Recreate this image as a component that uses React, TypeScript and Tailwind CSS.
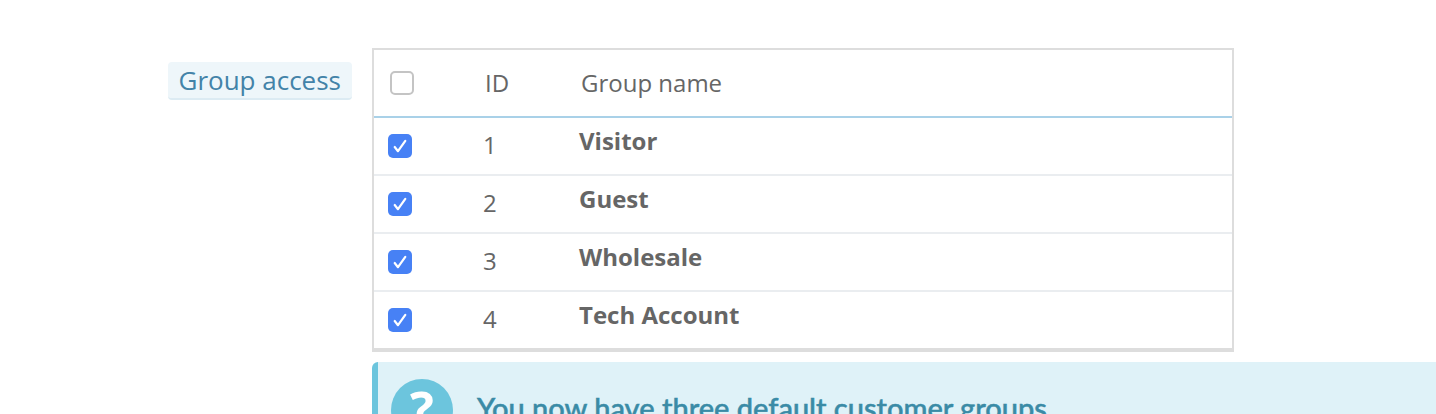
const groups = [
  { id: 1, name: 'Visitor' },
  { id: 2, name: 'Guest' },
  { id: 3, name: 'Wholesale' },
  { id: 4, name: 'Tech Account' },
];

const CheckedBox = () => (
  <span className="flex h-6 w-6 items-center justify-center rounded-[5px] bg-[#4781f5]">
    <svg width="14" height="14" viewBox="0 0 14 14" fill="none">
      <path d="M1.7 8L5 12.2L12.3 1.8" stroke="#ffffff" strokeWidth="2.2" strokeLinecap="round" strokeLinejoin="round" />
    </svg>
  </span>
);

const App: React.FC = () => {
  return (
    <div className="h-[414px] w-[1436px] overflow-hidden bg-white pt-12 font-['Open_Sans',sans-serif] text-[#666666]">
      <div className="flex">
        <div className="flex w-[352px] shrink-0 justify-end pt-[14px]">
          <span className="h-[38px] rounded-[4px] border-b-2 border-[#dcebf3] bg-[#eef6fa] pl-[10px] pr-[11px] text-[26px] leading-[36px] text-[#4383a8]">
            Group access
          </span>
        </div>

        {/* Groups table */}
        <div className="ml-5 h-[304px] w-[862px] border-2 border-b-4 border-[#dddddd]">
          <div className="flex h-[68px] items-center border-b-2 border-[#a9d1e8] text-[24px]">
            <div className="w-[110px] pl-4">
              <span className="block h-6 w-6 rounded-[5px] border-2 border-[#c4c4c4] bg-white" />
            </div>
            <div className="w-[97px] pl-px">ID</div>
            <div>Group name</div>
          </div>
          {groups.map((group) => (
            <div key={group.id} className="flex h-[58px] items-center border-b-2 border-[#eaedf0] last:border-transparent">
              <div className="w-[110px] pl-[14px]">
                <CheckedBox />
              </div>
              <div className="-ml-px -mt-[3px] w-[96px] text-[24px]">{group.id}</div>
              <div className="-mt-[10px] text-[24px] font-bold">{group.name}</div>
            </div>
          ))}
        </div>
      </div>

      {/* Info alert */}
      <div className="ml-[372px] mt-[10px] flex h-[100px] rounded-l-[6px] border-l-[6px] border-[#6cc5dd] bg-[#dff2f8]">
        <div className="ml-[13px] mt-[17px] flex h-[62px] w-[62px] items-start justify-center rounded-full bg-[#6cc5dd] pt-[5px] text-[50px] font-bold leading-none text-white">
          ?
        </div>
        <div className="ml-6 mt-[26px] font-['Lato',sans-serif] text-[29px] font-medium leading-[40px] text-[#3a8ba6] [-webkit-text-stroke:0.5px_#3a8ba6]">
          You now have three default customer groups.
        </div>
      </div>
    </div>
  );
};

export default App;
